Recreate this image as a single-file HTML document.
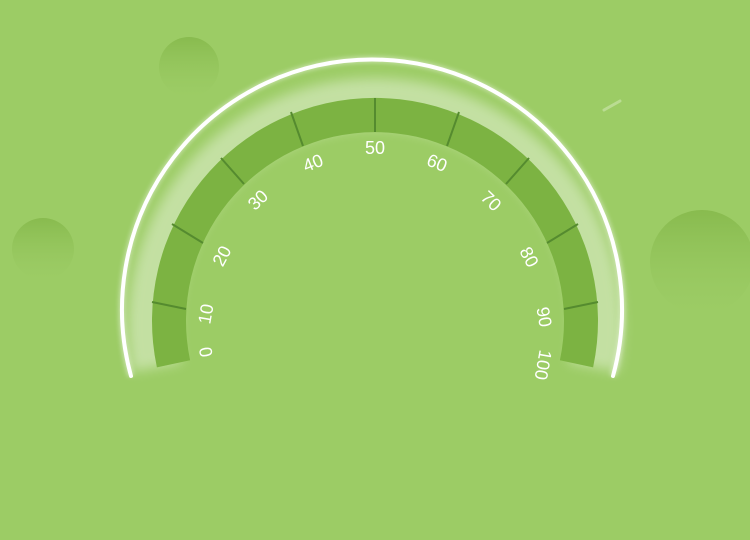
<!DOCTYPE html>
<html><head><meta charset="utf-8"><style>
html,body{margin:0;padding:0;background:#9ccc65;width:750px;height:540px;overflow:hidden}
svg{display:block}
text{font-family:"Liberation Sans","DejaVu Sans",sans-serif;font-size:18px;fill:#fff}
</style></head><body>
<svg width="750" height="540" viewBox="0 0 750 540">
<defs>
<linearGradient id="cg" x1="0" y1="0" x2="0" y2="1">
<stop offset="0" stop-color="#86b94c" stop-opacity="0.9"/>
<stop offset="1" stop-color="#9ccc65" stop-opacity="0.3"/>
</linearGradient>
<filter id="b8" x="-20%" y="-20%" width="140%" height="140%"><feGaussianBlur stdDeviation="6"/></filter>
<filter id="b3" x="-20%" y="-20%" width="140%" height="140%"><feGaussianBlur stdDeviation="2.5"/></filter>
</defs>
<rect width="750" height="540" fill="#9ccc65"/>
<circle cx="189" cy="67" r="30" fill="url(#cg)"/>
<circle cx="43" cy="249" r="31" fill="url(#cg)"/>
<circle cx="702" cy="262" r="52" fill="url(#cg)"/>
<line x1="604" y1="110" x2="620" y2="101" stroke="#d8ecbf" stroke-width="3" stroke-linecap="round" opacity="0.5"/>
<path d="M157 367 A222 222 0 1 1 593 367" fill="none" stroke="#fff" stroke-width="50" opacity="0.4" filter="url(#b8)"/>
<path d="M131 376 A250 250 0 1 1 613 376" fill="none" stroke="#fff" stroke-width="6" opacity="0.45" filter="url(#b3)"/>
<path d="M131 376 A250 250 0 1 1 613 376" fill="none" stroke="#fff" stroke-width="4" stroke-linecap="round"/>
<path d="M156.9 367.4 A223 223 0 1 1 593.1 367.4 L559.9 360.3 A189 189 0 1 0 190.1 360.3 Z" fill="#7cb342"/>
<g stroke="#558b2f" stroke-width="2">
<line x1="186" y1="309" x2="152" y2="302"/>
<line x1="203" y1="243" x2="172" y2="224"/>
<line x1="244" y1="184" x2="221" y2="158"/>
<line x1="303" y1="146" x2="291" y2="112"/>
<line x1="375" y1="132" x2="375" y2="98"/>
<line x1="447" y1="146" x2="459" y2="112"/>
<line x1="506" y1="184" x2="529" y2="158"/>
<line x1="547" y1="243" x2="578" y2="224"/>
<line x1="564" y1="309" x2="598" y2="302"/>
</g>
<g text-anchor="middle" dominant-baseline="central">
<text transform="translate(206,352) rotate(-100)">0</text>
<text transform="translate(206,314) rotate(-80)">10</text>
<text transform="translate(222,256) rotate(-62)">20</text>
<text transform="translate(258,200) rotate(-44)">30</text>
<text transform="translate(313,163) rotate(-22)">40</text>
<text transform="translate(375,148)">50</text>
<text transform="translate(437,163) rotate(22)">60</text>
<text transform="translate(491,201) rotate(44)">70</text>
<text transform="translate(529,257) rotate(62)">80</text>
<text transform="translate(544,317) rotate(80)">90</text>
<text transform="translate(543,365) rotate(100)">100</text>
</g>
</svg>
</body></html>
